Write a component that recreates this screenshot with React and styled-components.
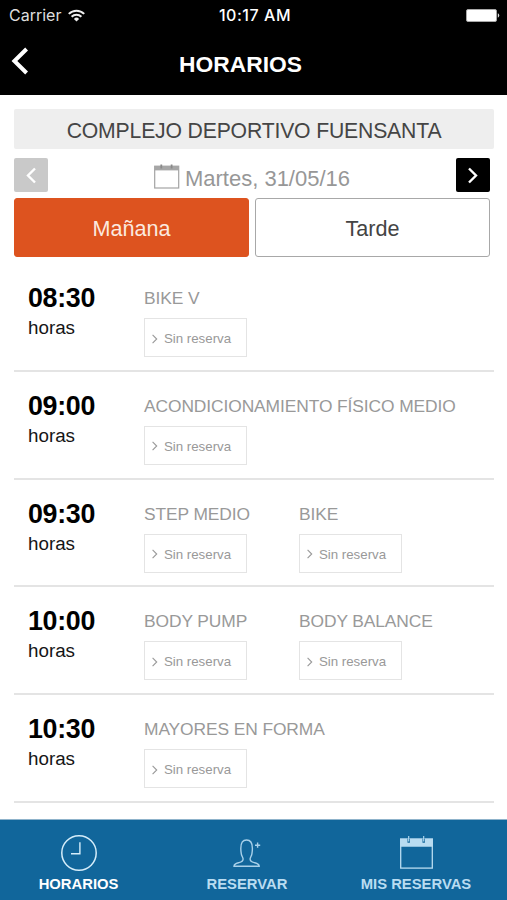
import React, { useState } from "react";
import styled, { createGlobalStyle } from "styled-components";

const schedule = [
  { time: "08:30", classes: ["BIKE V"] },
  { time: "09:00", classes: ["ACONDICIONAMIENTO FÍSICO MEDIO"] },
  { time: "09:30", classes: ["STEP MEDIO", "BIKE"] },
  { time: "10:00", classes: ["BODY PUMP", "BODY BALANCE"] },
  { time: "10:30", classes: ["MAYORES EN FORMA"] },
];

const WifiIcon = () => (
  <svg width="17" height="13" viewBox="0 0 17 13" fill="none" stroke="#f0f0f0">
    <path d="M0.8 4.9C5.1 0.6 11.9 0.6 16.2 4.9" strokeWidth="2" />
    <path d="M3.6 7.8C6.3 5.1 10.7 5.1 13.4 7.8" strokeWidth="2" />
    <path d="M5.9 9.9a3.7 3.7 0 0 1 5.2 0L8.5 12.6z" fill="#f0f0f0" stroke="none" />
  </svg>
);

const BatteryIcon = () => (
  <svg width="34" height="13" viewBox="0 0 34 13">
    <rect x="0.5" y="0.5" width="30" height="12" rx="1.5" fill="#fff" stroke="#a8a8a8" />
    <path d="M31.8 4.3a2.4 2.4 0 0 1 0 4.4z" fill="#d8d8d8" />
  </svg>
);

const BackIcon = () => (
  <svg width="18" height="28" viewBox="0 0 18 28" fill="none">
    <path d="M15.6 2L3.4 14L15.6 26" stroke="#fff" strokeWidth="4" />
  </svg>
);

const Chevron = ({ size, weight, flip }) => (
  <svg width={size / 1.7} height={size} viewBox="0 0 10 17" fill="none">
    <path
      d={flip ? "M9 1.5L2 8.5L9 15.5" : "M1 1.5L8 8.5L1 15.5"}
      stroke="currentColor"
      strokeWidth={weight}
    />
  </svg>
);

const DateIcon = () => (
  <svg width="26" height="25" viewBox="0 0 26 25" fill="none">
    <rect x="0.7" y="2.2" width="24" height="21.8" stroke="#a3a3a3" strokeWidth="1.2" />
    <path d="M0.5 2h24.4v4.4H0.5z" fill="#a6a6a6" />
    <path d="M7.3 0.4v4M17.6 0.4v4" stroke="#8a8a8a" strokeWidth="1.8" />
  </svg>
);

const ClockIcon = () => (
  <svg width="38" height="38" viewBox="0 0 38 38" fill="none" stroke="#d5edfa">
    <circle cx="19" cy="19" r="17.2" strokeWidth="1.5" />
    <path d="M19.9 8.3v11.4H11" strokeWidth="1.4" />
  </svg>
);

const UserIcon = () => (
  <svg width="28" height="30" viewBox="0 0 28 30" fill="none" stroke="#a9d1ea" strokeWidth="1.4">
    <path d="M1 28.2c0-2.6 2.6-3 5-3.6 2.8-.7 4.1-1.6 4.1-3.6 0-1.6-1.4-2.8-1.8-5.2-.3-1.8-.5-3-.5-5.4C7.8 4.8 9.4 2 13.6 2s5.8 2.8 5.8 8.4c0 2.4-.2 3.6-.5 5.4-.4 2.4-1.8 3.6-1.8 5.2 0 2 1.3 2.9 4.1 3.6 2.4.6 5 1 5 3.6z" />
    <path d="M24.6 4.6v5.2M22 7.2h5.2" />
  </svg>
);

const CalendarIcon = () => (
  <svg width="33" height="33" viewBox="0 0 33 33" fill="none">
    <rect x="0.7" y="3.2" width="31.6" height="28.9" stroke="#b9dcf1" strokeWidth="1.3" />
    <path d="M0 2.5h33v8.3H0z" fill="#b9dcf1" />
    <path d="M8.7 2.5v4.3M23.7 2.5v4.3" stroke="#11669b" strokeWidth="2.4" />
    <path d="M8.7 0v5.5M23.7 0v5.5" stroke="#b9dcf1" strokeWidth="1.1" />
  </svg>
);

const tabs = [
  { label: "HORARIOS", icon: <ClockIcon />, width: 157 },
  { label: "RESERVAR", icon: <UserIcon />, width: 180 },
  { label: "MIS RESERVAS", icon: <CalendarIcon />, width: 158 },
];

export default function App() {
  const [period, setPeriod] = useState("morning");
  const [tab, setTab] = useState("HORARIOS");

  return (
    <Screen>
      <GlobalStyle />
      <Header>
        <StatusBar>
          <Carrier>
            Carrier <WifiIcon />
          </Carrier>
          <Clock>10:17 AM</Clock>
          <Battery>
            <BatteryIcon />
          </Battery>
        </StatusBar>
        <TitleBar>
          <BackButton>
            <BackIcon />
          </BackButton>
          <Title>HORARIOS</Title>
        </TitleBar>
      </Header>
      <Content>
        <Center>COMPLEJO DEPORTIVO FUENSANTA</Center>
        <DateRow>
          <ArrowButton $disabled>
            <Chevron size={17} weight={2.4} flip />
          </ArrowButton>
          <CurrentDate>
            <DateIcon />
            <span>Martes, 31/05/16</span>
          </CurrentDate>
          <ArrowButton>
            <Chevron size={17} weight={2.4} />
          </ArrowButton>
        </DateRow>
        <Periods>
          <PeriodButton $active={period === "morning"} onClick={() => setPeriod("morning")}>
            Mañana
          </PeriodButton>
          <PeriodButton $active={period === "evening"} onClick={() => setPeriod("evening")}>
            Tarde
          </PeriodButton>
        </Periods>
        <Schedule>
          {schedule.map((slot) => (
            <Slot key={slot.time}>
              <div>
                <Time>{slot.time}</Time>
                <Hours>horas</Hours>
              </div>
              <Classes>
                {slot.classes.map((name) => (
                  <div key={name}>
                    <ClassName>{name}</ClassName>
                    <Booking>
                      <Chevron size={10} weight={1.9} />
                      Sin reserva
                    </Booking>
                  </div>
                ))}
              </Classes>
            </Slot>
          ))}
        </Schedule>
      </Content>
      <TabBar>
        {tabs.map(({ label, icon, width }) => (
          <Tab key={label} $width={width} $active={tab === label} onClick={() => setTab(label)}>
            <TabIcon>{icon}</TabIcon>
            <TabLabel>{label}</TabLabel>
          </Tab>
        ))}
      </TabBar>
    </Screen>
  );
}

const GlobalStyle = createGlobalStyle`
  * {
    box-sizing: border-box;
  }
  body {
    margin: 0;
    background: #fff;
    font-family: "Liberation Sans", Arial, sans-serif;
  }
  button {
    padding: 0;
    border: 0;
    background: none;
    font-family: inherit;
  }
  svg {
    display: block;
    flex: none;
  }
`;

const Screen = styled.div`
  display: flex;
  flex-direction: column;
  width: 507px;
  height: 900px;
  overflow: hidden;
`;

const Header = styled.header`
  height: 95px;
  background: #000;
  color: #fff;
`;

const StatusBar = styled.div`
  display: grid;
  grid-template-columns: 1fr auto 1fr;
  align-items: center;
  height: 30px;
  padding: 0 7px 0 9px;
  font-family: Inter, sans-serif;
  font-size: 16px;
`;

const Carrier = styled.div`
  display: flex;
  align-items: center;
  gap: 7px;
  color: #dedede;
`;

const Clock = styled.div`
  padding-left: 1px;
  font-weight: 500;
  letter-spacing: 0.55px;
`;

const Battery = styled.div`
  justify-self: end;
`;

const TitleBar = styled.div`
  display: grid;
  grid-template-columns: 60px 1fr 60px;
  align-items: center;
  height: 65px;
  padding-right: 26px;
`;

const BackButton = styled.button`
  padding: 0 0 3px 11px;
`;

const Title = styled.h1`
  margin: 3px 0 0;
  font-size: 22.8px;
  line-height: 26px;
  text-align: center;
`;

const Content = styled.main`
  flex: 1;
  min-height: 0;
  padding: 14px 13px 0 14px;
`;

const Center = styled.div`
  height: 40px;
  padding-top: 3px;
  border-radius: 2px;
  background: #eee;
  color: #454545;
  font-size: 21.2px;
  line-height: 38px;
  letter-spacing: -0.17px;
  text-align: center;
`;

const DateRow = styled.div`
  display: flex;
  align-items: center;
  justify-content: space-between;
  height: 34px;
  margin: 9px 4px 6px 0;
`;

const ArrowButton = styled.button`
  display: flex;
  align-items: center;
  justify-content: center;
  width: 34px;
  height: 34px;
  border-radius: 2px;
  background: ${({ $disabled }) => ($disabled ? "#c9c9c9" : "#000")};
  color: #fff;
`;

const CurrentDate = styled.div`
  display: flex;
  align-items: center;
  gap: 5px;
  color: #979797;
  font-size: 22px;
  line-height: 26px;

  svg {
    margin-top: 2px;
  }
  span {
    padding-top: 7px;
  }
`;

const Periods = styled.div`
  display: flex;
  gap: 6px;
  margin-right: 4px;
`;

const PeriodButton = styled.button`
  flex: 1;
  height: 59px;
  padding-top: 2px;
  border: 1px solid ${({ $active }) => ($active ? "#dd531f" : "#a8a8a8")};
  border-radius: 3px;
  background: ${({ $active }) => ($active ? "#dd531f" : "#fff")};
  color: ${({ $active }) => ($active ? "#fbe9df" : "#444")};
  font-size: 21.6px;
`;

const Schedule = styled.div`
  padding-top: 7px;
`;

const Slot = styled.div`
  display: grid;
  grid-template-columns: 116px 1fr;
  height: 107.8px;
  padding: 18px 0 0 14px;
  border-bottom: 2px solid #e4e4e4;
`;

const Time = styled.div`
  color: #000;
  font-size: 26.8px;
  font-weight: bold;
  line-height: 32px;
  letter-spacing: -0.3px;
`;

const Hours = styled.div`
  padding-top: 1px;
  color: #151515;
  font-size: 18.8px;
  line-height: 26px;
`;

const Classes = styled.div`
  display: grid;
  grid-template-columns: 155px 1fr;
`;

const ClassName = styled.div`
  color: #999;
  font-size: 17.4px;
  line-height: 32px;
  letter-spacing: -0.1px;
  white-space: nowrap;
`;

const Booking = styled.button`
  display: flex;
  align-items: center;
  gap: 6px;
  width: 103px;
  height: 39px;
  margin-top: 4px;
  padding: 2px 0 0 7px;
  border: 1px solid #e4e4e4;
  color: #999;
  font-size: 13.3px;
`;

const TabBar = styled.nav`
  display: flex;
  height: 81px;
  border-top: 1px solid #8fb3cb;
  background: #11669b;
`;

const Tab = styled.button`
  width: ${({ $width }) => $width}px;
  padding-top: 6px;
  color: ${({ $active }) => ($active ? "#fff" : "#b9dcf1")};
`;

const TabIcon = styled.div`
  display: flex;
  align-items: center;
  justify-content: center;
  height: 41px;
`;

const TabLabel = styled.div`
  padding-top: 1px;
  font-size: 14.8px;
  font-weight: bold;
  line-height: 20px;
`;
